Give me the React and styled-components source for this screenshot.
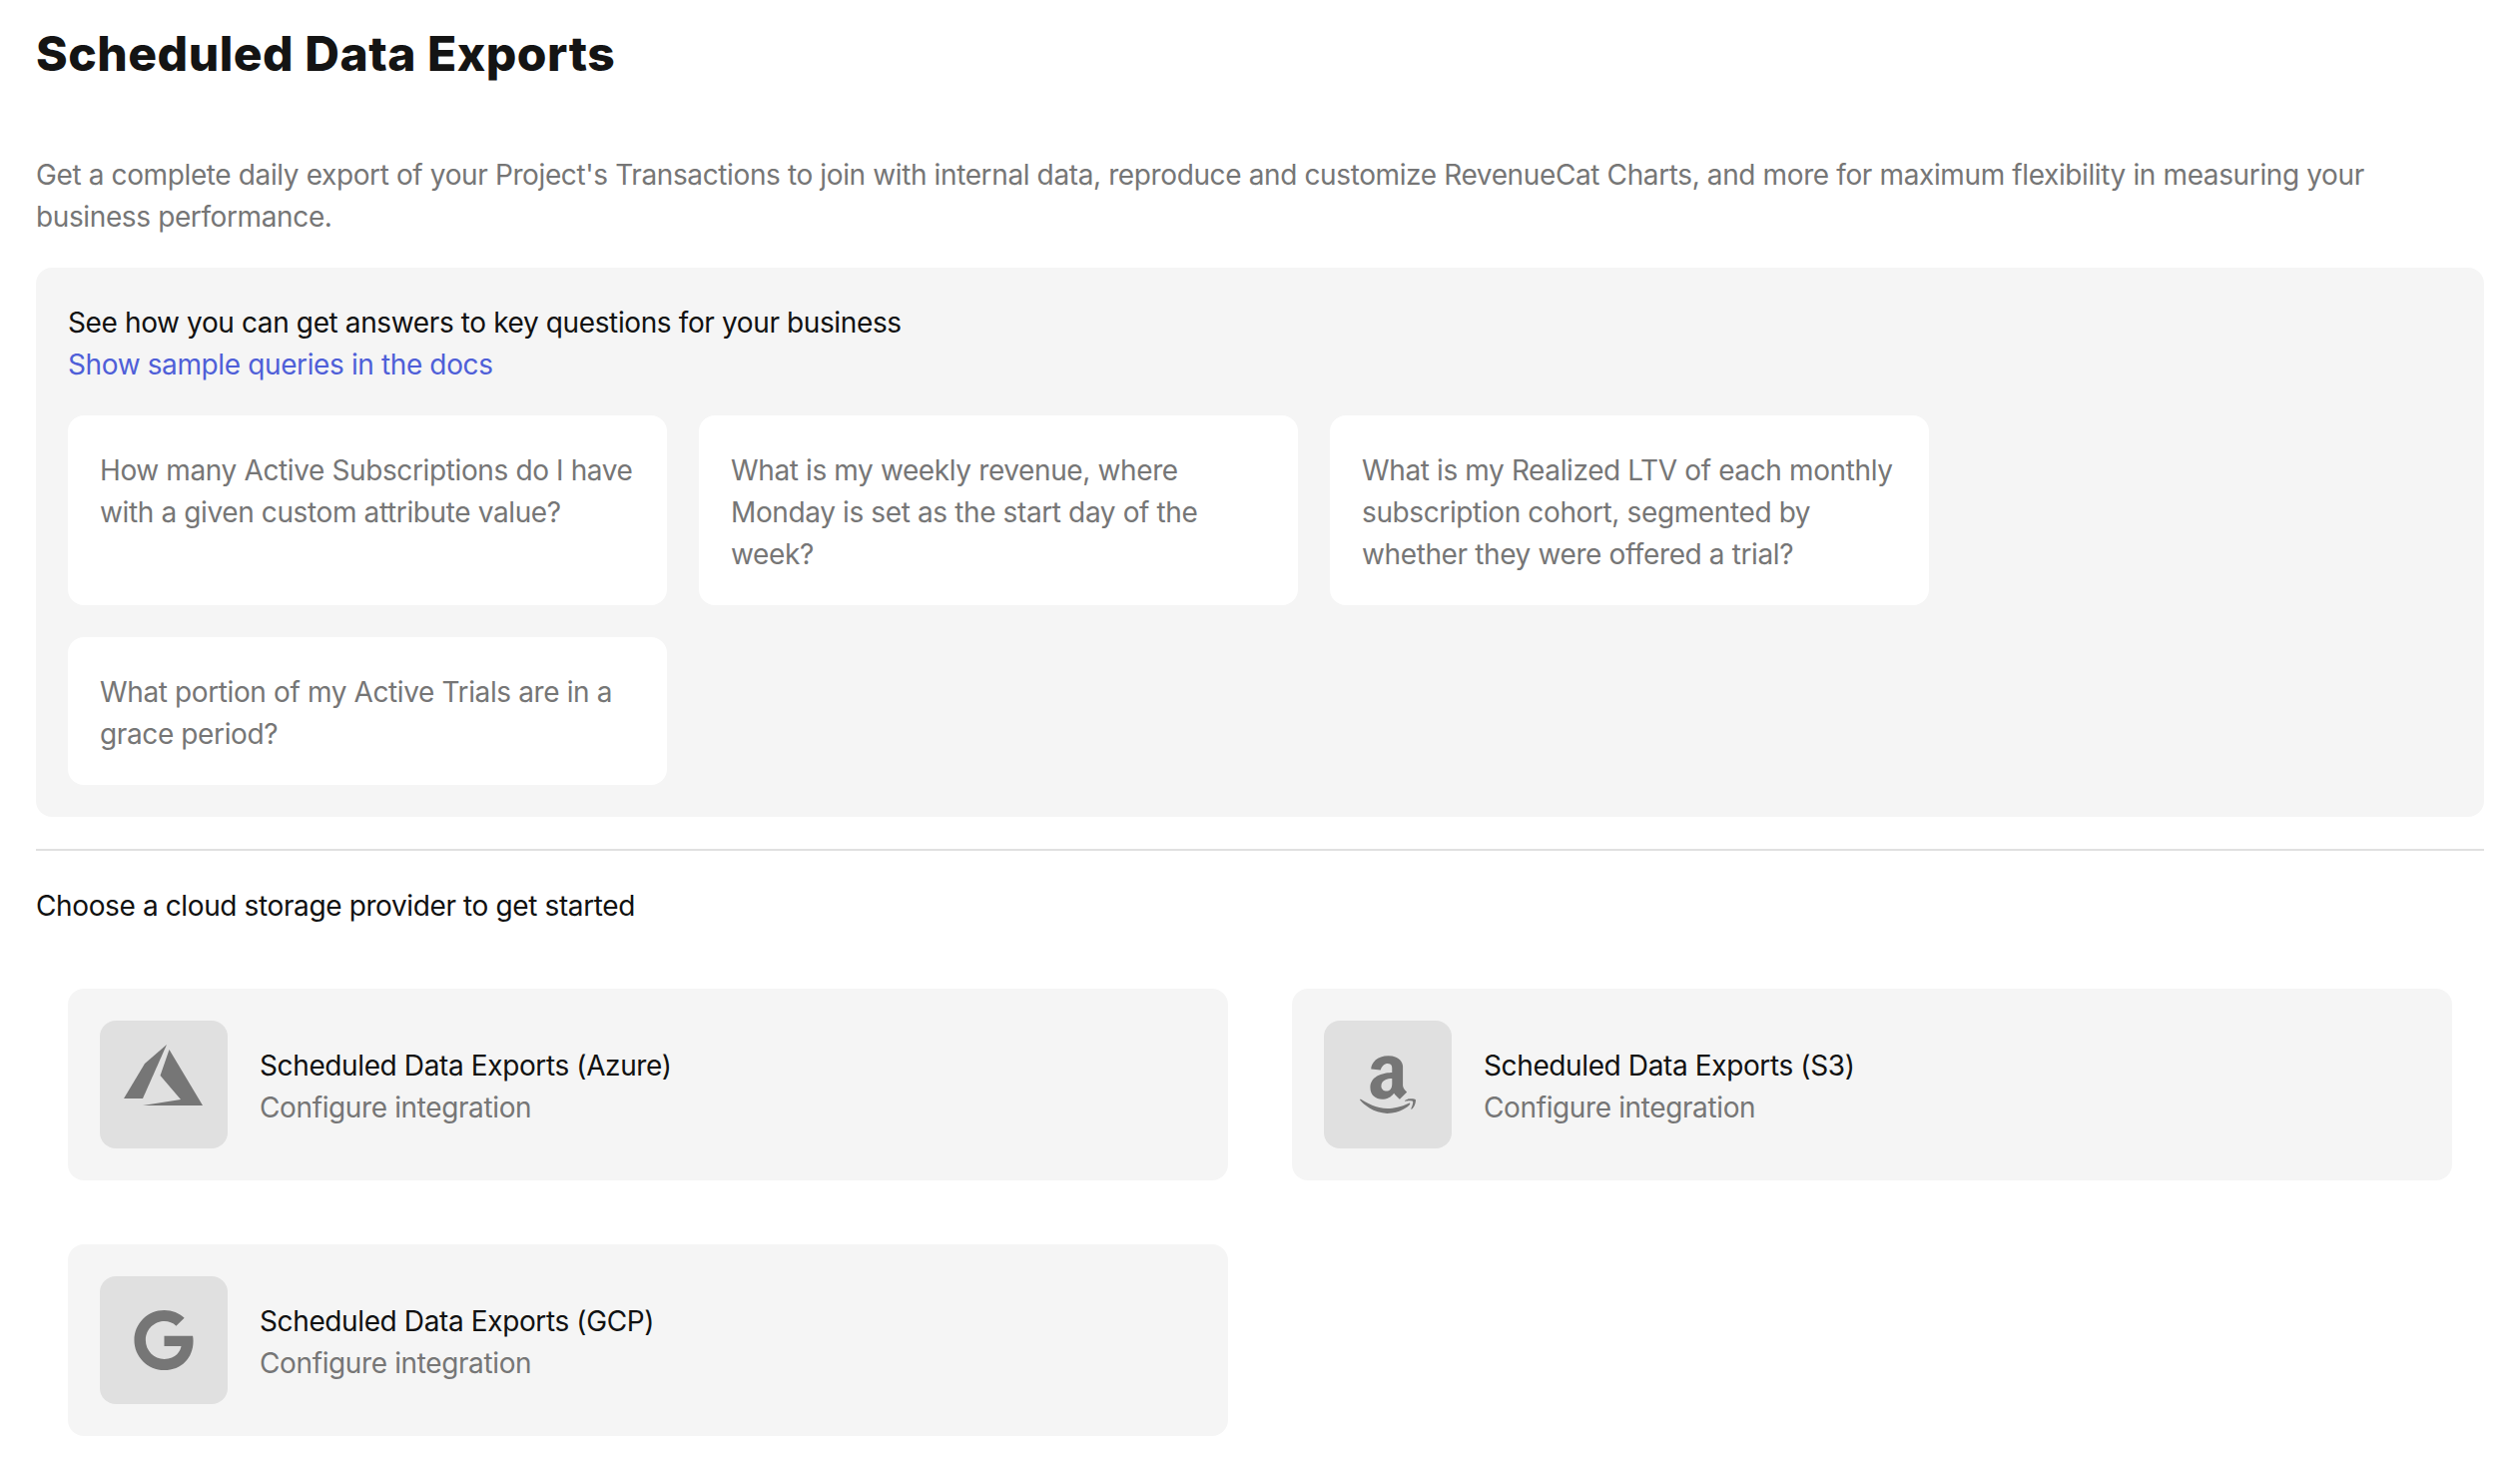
import styled, { createGlobalStyle } from "styled-components";
import { FaAmazon, FaGoogle } from "react-icons/fa";

const GlobalStyle = createGlobalStyle`
  body {
    margin: 0;
    background: #fff;
    font-family: Inter, "Liberation Sans", sans-serif;
    font-size: 28px;
    line-height: 42px;
    letter-spacing: -0.38px;
    color: #111;
  }
`;

const Page = styled.div`
  padding: 0 36px;
`;
const Title = styled.h1`
  margin: 0 0 72px;
  padding-top: 26px;
  font-size: 48px;
  line-height: 56px;
  font-weight: 800;
  letter-spacing: 0.5px;
  color: #141414;
`;
const Intro = styled.p`
  margin: 0 0 30px;
  padding-right: 24px;
  color: #767676;
`;
const Panel = styled.section`
  padding: 34px 32px 32px;
  border-radius: 16px;
  background: #f5f5f5;
`;
const PanelTitle = styled.div`
  color: #111;
`;
const DocsLink = styled.a`
  display: block;
  color: #4f5fd8;
  text-decoration: none;
`;
const Questions = styled.div`
  display: grid;
  grid-template-columns: repeat(auto-fill, 600px);
  gap: 32px;
  margin-top: 30px;
`;
const Question = styled.div`
  padding: 34px 32px 30px;
  border-radius: 16px;
  background: #fff;
  color: #767676;
`;
const Divider = styled.hr`
  height: 2px;
  margin: 32px 0 34px;
  border: 0;
  background: #e0e0e0;
`;
const ProviderIntro = styled.div`
  color: #111;
`;
const Providers = styled.div`
  display: grid;
  grid-template-columns: 1fr 1fr;
  gap: 64px;
  padding: 62px 32px 28px;
`;
const Provider = styled.a`
  display: flex;
  align-items: center;
  gap: 32px;
  padding: 32px;
  border-radius: 16px;
  background: #f5f5f5;
`;
const Logo = styled.div`
  display: flex;
  align-items: center;
  justify-content: center;
  width: 128px;
  height: 128px;
  border-radius: 16px;
  background: #e0e0e0;
  color: #767676;
  font-size: ${(props) => props.size}px;
`;
const ProviderText = styled.div`
  padding-top: 4px;
`;
const ProviderName = styled.div`
  color: #111;
`;
const ProviderAction = styled.div`
  color: #767676;
`;

const AzureIcon = () => (
  <svg width="1em" height="1em" viewBox="0 0 128 128" fill="currentColor">
    <polygon points="24,78 45,43 67,24 43,78" />
    <polygon points="69.5,29 103,85 43,85 81,79 60.5,55" />
  </svg>
);

const questions = [
  "How many Active Subscriptions do I have with a given custom attribute value?",
  "What is my weekly revenue, where Monday is set as the start day of the week?",
  "What is my Realized LTV of each monthly subscription cohort, segmented by whether they were offered a trial?",
  "What portion of my Active Trials are in a grace period?",
];

const providers = [
  { name: "Scheduled Data Exports (Azure)", icon: AzureIcon, size: 128 },
  { name: "Scheduled Data Exports (S3)", icon: FaAmazon, size: 66 },
  { name: "Scheduled Data Exports (GCP)", icon: FaGoogle, size: 62 },
];

const App = () => {
  return (
    <Page>
      <GlobalStyle />
      <Title>Scheduled Data Exports</Title>
      <Intro>
        Get a complete daily export of your Project's Transactions to join with internal data,
        reproduce and customize RevenueCat Charts, and more for maximum flexibility in measuring
        your business performance.
      </Intro>
      <Panel>
        <PanelTitle>See how you can get answers to key questions for your business</PanelTitle>
        <DocsLink>Show sample queries in the docs</DocsLink>
        <Questions>
          {questions.map((question, index) => (
            <Question key={index}>{question}</Question>
          ))}
        </Questions>
      </Panel>
      <Divider />
      <ProviderIntro>Choose a cloud storage provider to get started</ProviderIntro>
      <Providers>
        {providers.map((provider, index) => (
          <Provider key={index}>
            <Logo size={provider.size}>
              <provider.icon />
            </Logo>
            <ProviderText>
              <ProviderName>{provider.name}</ProviderName>
              <ProviderAction>Configure integration</ProviderAction>
            </ProviderText>
          </Provider>
        ))}
      </Providers>
    </Page>
  );
};

export default App;
